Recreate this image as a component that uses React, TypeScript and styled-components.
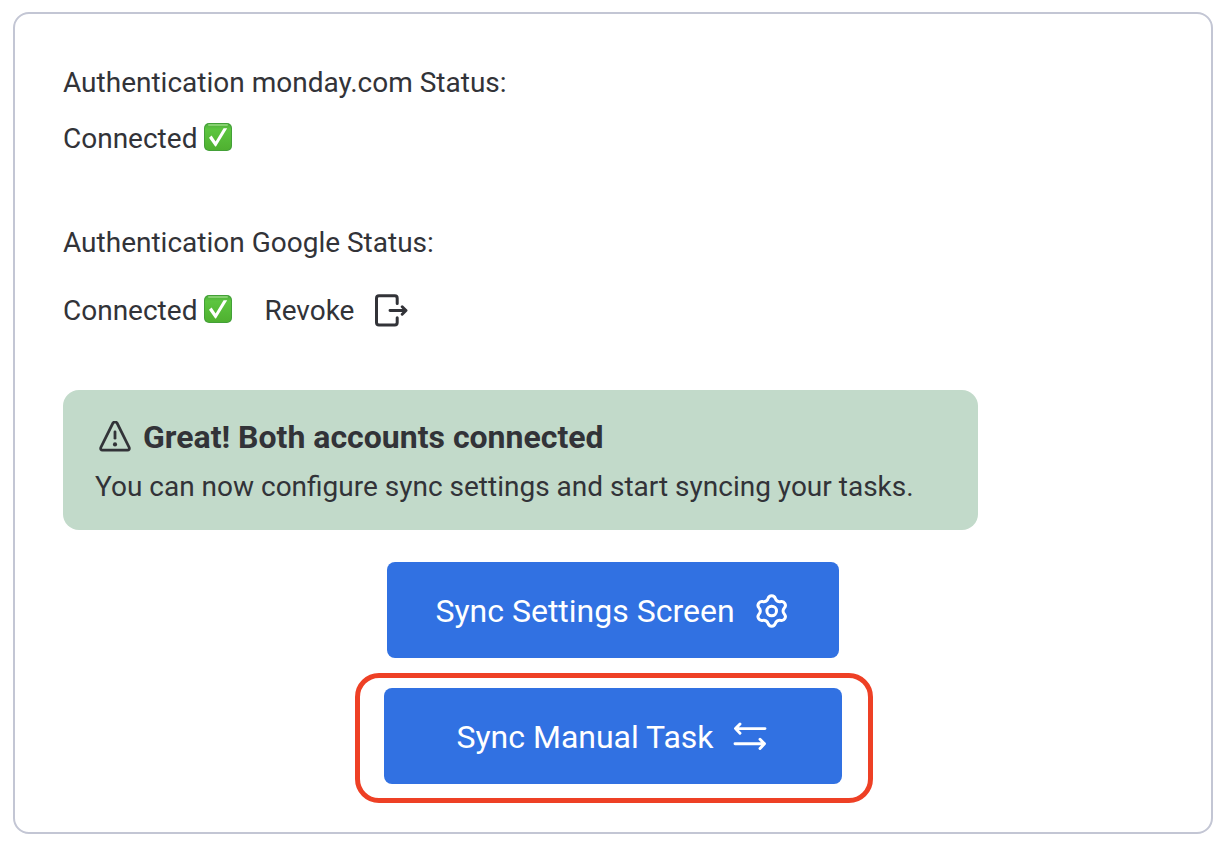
import React from 'react';
import styled, { createGlobalStyle } from 'styled-components';

const GlobalStyle = createGlobalStyle`
  *, *::before, *::after { box-sizing: border-box; }
  body {
    margin: 0;
    background: #ffffff;
    color: #323338;
    font-family: Roboto, "Liberation Sans", sans-serif;
    font-size: 28px;
    line-height: 32px;
  }
`;

const Card = styled.main`
  display: flex;
  flex-direction: column;
  align-items: flex-start;
  margin: 12px 15px 16px 13px;
  padding: 53px 48px 29px;
  border: 2px solid #c3c6d4;
  border-radius: 16px;
`;

const Account = styled.section<{ $gap: number; $after: number }>`
  display: flex;
  flex-direction: column;
  gap: ${({ $gap }) => $gap}px;
  margin-bottom: ${({ $after }) => $after}px;
`;

const Label = styled.p`
  margin: 0;
`;

const StatusRow = styled.div`
  display: flex;
  align-items: center;
  gap: 32px;
`;

const Status = styled.span`
  display: flex;
  gap: 7px;
`;

const RevokeButton = styled.button`
  display: flex;
  align-items: center;
  gap: 20px;
  height: 32px;
  padding: 0;
  border: 0;
  background: none;
  color: inherit;
  font: inherit;
  cursor: pointer;
`;

const Notice = styled.section`
  max-width: 100%;
  padding: 31px 64px 27px 32px;
  border-radius: 16px;
  background: #c2daca;
`;

const NoticeTitle = styled.h2`
  display: flex;
  align-items: center;
  gap: 12px;
  margin: 0 0 18px 4px;
  font-size: 32px;
  line-height: 32px;
  font-weight: 700;
`;

const Actions = styled.div`
  display: flex;
  flex-direction: column;
  align-items: center;
  align-self: stretch;
  gap: 15px;
  margin-top: 32px;
`;

const ActionButton = styled.button<{ $width: number; $gap: number }>`
  display: flex;
  align-items: center;
  justify-content: center;
  gap: ${({ $gap }) => $gap}px;
  width: ${({ $width }) => $width}px;
  max-width: 100%;
  height: 96px;
  padding: 2px 3px 0 0;
  border: 0;
  border-radius: 8px;
  background: #3171e2;
  color: #ffffff;
  font: inherit;
  font-size: 32px;
  cursor: pointer;
`;

const Highlight = styled.div`
  margin-left: 2px;
  padding: 10px 26px 14px 24px;
  border: 5px solid #ee4025;
  border-radius: 24px;
`;

const CheckMark = () => (
  <svg width="28" height="28" viewBox="0 0 28 28" role="img" aria-label="Yes">
    <defs>
      <linearGradient id="tile" x1="0" y1="0" x2="0" y2="1">
        <stop offset="0" stopColor="#4fae3c" />
        <stop offset="0.2" stopColor="#5cc53f" />
        <stop offset="1" stopColor="#4fb030" />
      </linearGradient>
    </defs>
    <rect width="28" height="28" rx="5" fill="#43a038" />
    <rect x="1" y="1" width="26" height="26" rx="4.5" fill="url(#tile)" />
    <rect x="4" y="1" width="20" height="2" rx="1" fill="#86d070" />
    <path d="M5 14.7 7.6 12.6 11.6 18.4 19.6 5.2H23.2L12 23.4H11.2Z" fill="#fff" />
  </svg>
);

const ExitIcon = () => (
  <svg width="34" height="34" viewBox="0 0 34 34" fill="none" stroke="currentColor" strokeWidth="3" strokeLinecap="round" strokeLinejoin="round" aria-hidden="true">
    <path d="M23.2 9.5V4.2Q23.2 1.7 20.8 1.7H5Q2.5 1.7 2.5 4.2V28.6Q2.5 31.1 5 31.1H20.8Q23.2 31.1 23.2 28.6V23.8" />
    <path d="M16 16.5H32M28.2 12.7 32 16.5 28.2 20.3" strokeWidth="2.9" />
  </svg>
);

const WarningIcon = () => (
  <svg width="32" height="32" viewBox="0 0 32 32" fill="none" stroke="currentColor" strokeWidth="2.8" strokeLinecap="round" strokeLinejoin="round" aria-hidden="true">
    <path d="M13.9 2.2Q16 -.4 18.1 2.2L30.2 26.5Q30.8 29 28.4 29.2H3.6Q1.2 29 1.8 26.5Z" />
    <path d="M16 10.8V17.2" />
    <circle cx="16" cy="23.4" r="2.1" fill="currentColor" stroke="none" />
  </svg>
);

const gearPoint = (degrees: number) => {
  const angle = (degrees * Math.PI) / 180;
  return `${(15.7 + 13.1 * Math.sin(angle)).toFixed(2)} ${(17 - 13.1 * Math.cos(angle)).toFixed(2)}`;
};

// Six rounded teeth, each followed by a short concave arc.
const gearOutline =
  `M${gearPoint(-16)}` +
  [0, 60, 120, 180, 240, 300]
    .map((d) => `A3.8 3.8 0 0 1 ${gearPoint(d + 16)}A4.4 4.4 0 0 0 ${gearPoint(d + 44)}`)
    .join('') +
  'Z';

const GearIcon = () => (
  <svg width="32" height="34" viewBox="0 0 32 34" fill="none" stroke="currentColor" strokeWidth="3" strokeLinejoin="round" aria-hidden="true">
    <path d={gearOutline} />
    <circle cx="15.7" cy="17" r="4.8" />
  </svg>
);

const SwapIcon = () => (
  <svg width="34" height="30" viewBox="0 0 34 30" fill="none" stroke="currentColor" strokeWidth="2.9" strokeLinecap="round" strokeLinejoin="round" aria-hidden="true">
    <path d="M32 6.6H2.5M7 2 2.5 6.6 7 11.2" />
    <path d="M2 21.8H31.5M27 17.2 31.5 21.8 27 26.4" />
  </svg>
);

const Connected = () => (
  <Status>
    Connected
    <CheckMark />
  </Status>
);

export default function App() {
  return (
    <>
      <GlobalStyle />
      <Card>
        <Account $gap={24} $after={72}>
          <Label>Authentication monday.com Status:</Label>
          <Connected />
        </Account>
        <Account $gap={36} $after={63}>
          <Label>Authentication Google Status:</Label>
          <StatusRow>
            <Connected />
            <RevokeButton type="button">
              Revoke
              <ExitIcon />
            </RevokeButton>
          </StatusRow>
        </Account>
        <Notice>
          <NoticeTitle>
            <WarningIcon />
            Great! Both accounts connected
          </NoticeTitle>
          <Label>You can now configure sync settings and start syncing your tasks.</Label>
        </Notice>
        <Actions>
          <ActionButton type="button" $width={452} $gap={21}>
            Sync Settings Screen
            <GearIcon />
          </ActionButton>
          <Highlight>
            <ActionButton type="button" $width={458} $gap={19}>
              Sync Manual Task
              <SwapIcon />
            </ActionButton>
          </Highlight>
        </Actions>
      </Card>
    </>
  );
}
